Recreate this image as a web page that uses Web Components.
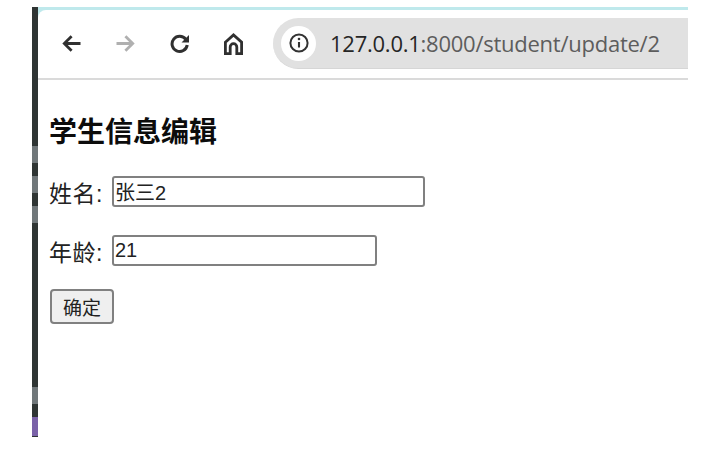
<!DOCTYPE html>
<html lang="zh">
<head>
<meta charset="utf-8">
<title>学生信息编辑</title>
<style>
html,body{margin:0;padding:0;background:#fff;height:100%;overflow:hidden}
body{font-family:"Liberation Sans","Noto Sans CJK SC",sans-serif;color:#000}
</style>
</head>
<body>
<shot-frame>
  <browser-bar url-host="127.0.0.1" url-path=":8000/student/update/2"></browser-bar>
  <student-form></student-form>
</shot-frame>
<script>
class ShotFrame extends HTMLElement{
  constructor(){super();
    const segs=[[139,'#2f3534'],[17,'#70777a'],[13,'#2f3534'],[17,'#70777a'],[13,'#2f3534'],[17,'#70777a'],[164,'#2f3534'],[17,'#70777a'],[13,'#2f3534'],[19,'#7a62a8'],[1,'#2f3534']];
    this.attachShadow({mode:'open'}).innerHTML=`<style>
      :host{display:flex;width:656px;height:430px;margin:7px 0 0 32px}
      .stripe{width:6px;display:flex;flex-direction:column;flex:none}
      .stripe i{display:block;flex:none}
      .main{width:650px;flex:none;display:flex;flex-direction:column}
    </style><div class="stripe">${segs.map(s=>`<i style="height:${s[0]}px;background:${s[1]}"></i>`).join('')}</div><div class="main"><slot></slot></div>`;
  }
}
class BrowserBar extends HTMLElement{
  constructor(){super();
    const host=this.getAttribute('url-host'),path=this.getAttribute('url-path');
    this.attachShadow({mode:'open'}).innerHTML=`<style>
      :host{display:block;box-sizing:border-box;height:73px;background:#bfe9ec;padding-top:3px}
      .bar{box-sizing:border-box;height:70px;background:#fff;border-top-left-radius:8px;border-bottom:2px solid #dadada;display:flex;align-items:center;padding-bottom:1px}
      svg{display:block;flex:none}
      .back{margin-left:24px}
      .fwd{margin-left:35px}
      .reload{margin-left:35px}
      .home{margin-left:34px}
      .omni{margin-left:30px;flex:1;height:51px;box-sizing:border-box;background:#e1e1e1;border-radius:26px 0 0 26px;display:flex;align-items:center;padding-left:8px;border-bottom:1px solid #d6d6d6}
      .badge{width:35px;height:35px;border-radius:50%;background:#fff;display:flex;align-items:center;justify-content:center;flex:none}
      .url{margin-left:14px;font:22px/1 "Open Sans","Noto Sans",sans-serif;color:#5d5d5d;white-space:nowrap;letter-spacing:-.25px}
      .url b{font-weight:400;color:#262626}
    </style><div class="bar">
      <svg class="back" width="19" height="19" viewBox="0 0 19 19" fill="none" stroke="#303030" stroke-width="2.8"><path d="M18.5 9.5H2.5M9.6 2.2 2.3 9.5l7.3 7.3"/></svg>
      <svg class="fwd" width="19" height="19" viewBox="0 0 19 19" fill="none" stroke="#b0b0b0" stroke-width="2.8"><path d="M.5 9.5h16M9.4 2.2l7.3 7.3-7.3 7.3"/></svg>
      <svg class="reload" width="20" height="20" viewBox="0 0 20 20" fill="none"><path d="M15.8 5.4A7.6 7.6 0 1 0 17.2 11" stroke="#303030" stroke-width="3"/><path d="M19 1v7.5h-7.5z" fill="#303030"/></svg>
      <svg class="home" width="19" height="22" viewBox="0 0 19 22" fill="none" stroke="#303030" stroke-width="2.8"><path d="M1.4 9.2 9.5 1.9l8.1 7.3v11.4h-4.8v-6.6a3.3 3.3 0 0 0-6.6 0v6.6H1.4z"/></svg>
      <div class="omni"><div class="badge"><svg width="20" height="20" viewBox="0 0 20 20" fill="none"><circle cx="10" cy="10" r="8.6" stroke="#333" stroke-width="2"/><path d="M10 9v5.5" stroke="#333" stroke-width="2.1"/><circle cx="10" cy="6" r="1.3" fill="#333"/></svg></div><div class="url"><b>${host}</b>${path}</div></div>
    </div>`;
  }
}
class FormField extends HTMLElement{
  constructor(){super();
    const w=this.getAttribute('width'),label=this.getAttribute('label'),value=this.getAttribute('value');
    this.attachShadow({mode:'open'}).innerHTML=`<style>
      :host{display:flex;align-items:center;height:31px;color:#222}
      label{width:63px;flex:none;white-space:nowrap;font-size:23px;letter-spacing:.5px}
      input{box-sizing:border-box;width:${w}px;height:31px;margin:0;border:2px solid #808080;border-radius:3px;padding:0 1px;font:20px "Liberation Sans","Noto Sans CJK SC",sans-serif;color:#222;background:#fff;outline:none}
    </style><label>${label}</label><input type="text" value="${value}">`;
  }
}
class StudentForm extends HTMLElement{
  constructor(){super();
    this.attachShadow({mode:'open'}).innerHTML=`<style>
      :host{display:flex;flex-direction:column;align-items:flex-start;padding:36px 0 0 11px;font-family:"Liberation Sans","Noto Sans CJK SC",sans-serif}
      h1{margin:0 0 27px;font-size:28px;line-height:33px;font-weight:700;color:#0c0c0c}
      form-field{margin-bottom:28px}
      button{box-sizing:border-box;width:64px;height:35px;margin:-5px 0 0 1px;padding:0;border:2px solid #808080;border-radius:4px;background:#efefef;font:19px "Liberation Sans","Noto Sans CJK SC",sans-serif;color:#222}
    </style><h1>学生信息编辑</h1>
    <form-field label="姓名:" value="张三2" width="313"></form-field>
    <form-field label="年龄:" value="21" width="265"></form-field>
    <button type="button">确定</button>`;
  }
}
customElements.define('form-field',FormField);
customElements.define('shot-frame',ShotFrame);
customElements.define('browser-bar',BrowserBar);
customElements.define('student-form',StudentForm);
</script>
</body>
</html>
